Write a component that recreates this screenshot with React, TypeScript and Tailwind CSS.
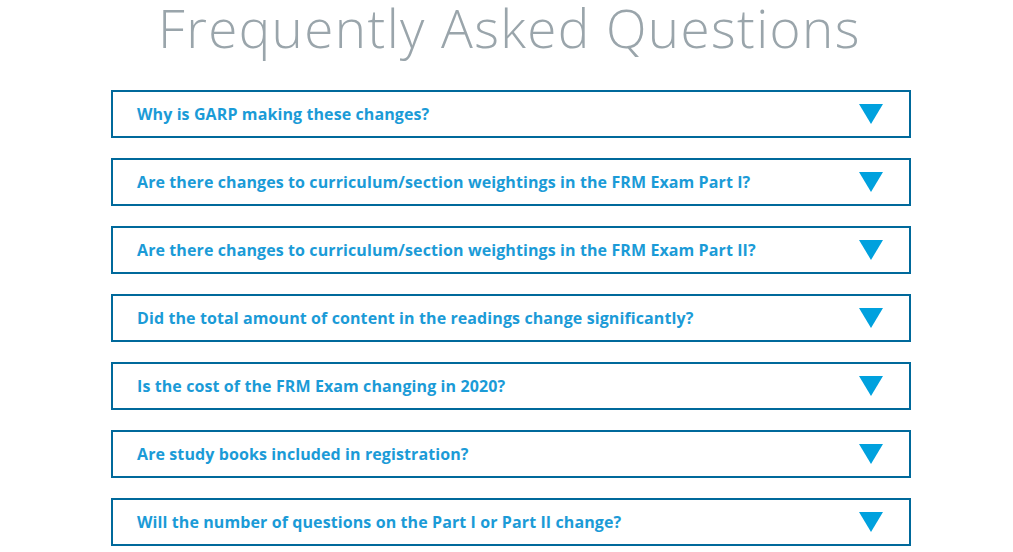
import React from "react";

const questions = [
  "Why is GARP making these changes?",
  "Are there changes to curriculum/section weightings in the FRM Exam Part I?",
  "Are there changes to curriculum/section weightings in the FRM Exam Part II?",
  "Did the total amount of content in the readings change significantly?",
  "Is the cost of the FRM Exam changing in 2020?",
  "Are study books included in registration?",
  "Will the number of questions on the Part I or Part II change?",
];

export default function App() {
  return (
    <div className="w-[1013px] h-[552px] overflow-hidden bg-white font-['Open_Sans',sans-serif]">
      <h1 className="text-center text-[53px] leading-[56px] pl-[6px] font-light text-[#9aa5ab] tracking-[1.4px] whitespace-nowrap">
        Frequently Asked Questions
      </h1>
      <div className="mt-[34px] ml-[111px] w-[800px] flex flex-col gap-[20px]">
        {questions.map((q) => (
          <div
            key={q}
            className="h-[48px] border-2 border-[#00699b] flex items-center justify-between pl-[24px] pr-[26px]"
          >
            <span className="text-[16px] font-bold text-[#1b9bd7] tracking-[0.1px]">{q}</span>
            <svg width="24" height="20" viewBox="0 0 24 20">
              <polygon points="0,0 24,0 12,20" fill="#00a1de" />
            </svg>
          </div>
        ))}
      </div>
    </div>
  );
}
